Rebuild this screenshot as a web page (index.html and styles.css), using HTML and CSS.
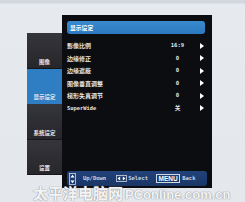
FILE: index.html
```html
<!DOCTYPE html>
<html>
<head>
<meta charset="utf-8">
<link rel="stylesheet" href="styles.css">
</head>
<body>
<div class="stage">
  <div class="sidebar">
    <div class="tab">图像</div>
    <div class="tab active">显示设定</div>
    <div class="tab">系统设定</div>
    <div class="tab">设置</div>
  </div>
  <div class="panel">
    <div class="header">显示设定</div>
    <div class="rows">
      <div class="row"><span class="label">影像比例</span><span class="value">16:9</span><span class="arrow"></span></div>
      <div class="row"><span class="label">边缘修正</span><span class="value">0</span><span class="arrow"></span></div>
      <div class="row"><span class="label">边缘遮蔽</span><span class="value">0</span><span class="arrow"></span></div>
      <div class="row"><span class="label">图像垂直调整</span><span class="value">0</span><span class="arrow"></span></div>
      <div class="row"><span class="label">梯形失真调节</span><span class="value">0</span><span class="arrow"></span></div>
      <div class="row"><span class="label mono">SuperWide</span><span class="value cjk">关</span><span class="arrow"></span></div>
    </div>
    <div class="footer">
      <span class="ud"><svg width="7" height="12" viewBox="0 0 7 12"><rect x="0.5" y="0.5" width="6" height="11" fill="none" stroke="#cfd8e6" stroke-width="0.8"/><path d="M3.5 1.8 L5.6 4.6 H1.4 Z M3.5 10.2 L5.6 7.4 H1.4 Z" fill="#fff"/></svg></span>
      <span class="ftext">Up/Down</span>
      <span class="lr"><svg width="11" height="7" viewBox="0 0 11 7"><rect x="0.5" y="0.5" width="10" height="6" fill="none" stroke="#cfd8e6" stroke-width="0.8"/><path d="M1.5 3.5 L4.2 1.5 V5.5 Z M9.5 3.5 L6.8 1.5 V5.5 Z" fill="#fff"/></svg></span>
      <span class="ftext">Select</span>
      <span class="menu">MENU</span>
      <span class="ftext">Back</span>
    </div>
  </div>
  <div class="watermark"><span class="wm-cn">太平洋电脑网</span><span class="wm-en">PConline.com.cn</span></div>
</div>
</body>
</html>
```

FILE: styles.css
```css
html, body {
  margin: 0;
  padding: 0;
}
body {
  background: #e3e7ec;
}
.stage {
  position: relative;
  width: 245px;
  height: 202px;
  overflow: hidden;
  box-sizing: border-box;
  display: flex;
  align-items: flex-start;
  padding: 15px 0 0 27px;
  background: linear-gradient(#d3d8de 0, #d3d8de 3px, #e6e9ee 4px, #e4e8ed 100%);
  font-family: "Noto Sans CJK SC", "DejaVu Sans", sans-serif;
}
.sidebar {
  width: 35px;
  margin-top: 18px;
  display: flex;
  flex-direction: column;
}
.tab {
  height: 35.5px;
  box-sizing: border-box;
  display: flex;
  align-items: flex-end;
  justify-content: center;
  padding-bottom: 3px;
  font-size: 5.5px;
  line-height: 6px;
  font-weight: bold;
  color: #e8e8ec;
  background: linear-gradient(#35353c, #26262b);
  border-bottom: 1px solid #17171a;
}
.tab.active {
  background: #2f7dc3;
  border-bottom-color: #2f7dc3;
}
.panel {
  width: 150px;
  height: 173px;
  box-sizing: border-box;
  background: #0b0d11;
  padding: 6px 5px 2px 5px;
  display: flex;
  flex-direction: column;
}
.header {
  height: 13px;
  margin-right: 2px;
  border-radius: 3px;
  background: linear-gradient(#3a8ad0, #2c79bf);
  color: #fff;
  font-size: 5.8px;
  font-weight: bold;
  line-height: 13px;
  padding-left: 3px;
}
.rows {
  margin-top: 5.5px;
  display: flex;
  flex-direction: column;
}
.row {
  height: 12.5px;
  display: flex;
  align-items: center;
  color: #e6e6e6;
}
.label {
  width: 100.5px;
  font-size: 6px;
  font-weight: bold;
  line-height: 7px;
}
.label.mono {
  font-family: "DejaVu Sans Mono", monospace;
  font-size: 5.4px;
}
.value {
  width: 20px;
  text-align: center;
  font-family: "DejaVu Sans Mono", monospace;
  font-size: 5.6px;
  font-weight: bold;
  line-height: 7px;
}
.value.cjk {
  font-family: "Noto Sans CJK SC", sans-serif;
}
.arrow {
  margin-left: 12px;
  width: 0;
  height: 0;
  border-top: 3px solid transparent;
  border-bottom: 3px solid transparent;
  border-left: 4px solid #ffffff;
}
.footer {
  margin-top: auto;
  height: 15px;
  margin-right: 0;
  border-radius: 3px;
  background: linear-gradient(#21427a, #1a3666);
  display: flex;
  align-items: center;
  padding-left: 2px;
  color: #cdd7e6;
  font-family: "DejaVu Sans Mono", monospace;
  font-size: 5.5px;
  font-weight: bold;
}
.ud {
  display: flex;
  margin-right: 7px;
}
.lr {
  display: flex;
  margin-left: 10px;
  margin-right: 1px;
}
.ftext {
  line-height: 7px;
}
.menu {
  margin-left: 8px;
  margin-right: 2px;
  border: 0.8px solid #cfd8e6;
  padding: 0 1.5px;
  font-family: "Liberation Sans", sans-serif;
  font-size: 6.5px;
  line-height: 7px;
  color: #ffffff;
}
.watermark {
  position: absolute;
  left: 33px;
  top: 185px;
  display: flex;
  align-items: baseline;
  gap: 2px;
  color: rgba(255, 255, 255, 0.92);
  font-weight: bold;
  text-shadow: 0 0 1px #8a8f96, 0 0 1px #8a8f96;
  white-space: nowrap;
}
.wm-cn {
  font-family: "Noto Sans CJK SC", sans-serif;
  font-size: 15px;
  line-height: 16px;
}
.wm-en {
  font-family: "Liberation Sans", sans-serif;
  font-size: 13px;
  line-height: 16px;
}
```
